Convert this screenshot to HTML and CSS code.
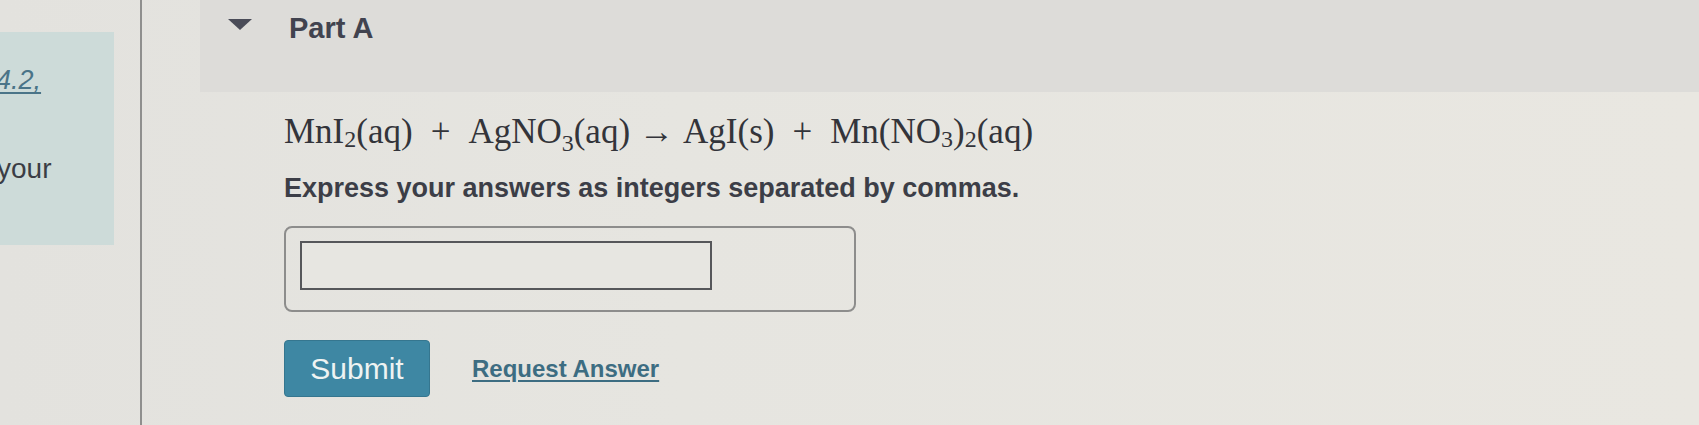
FILE: index.html
```html
<!DOCTYPE html>
<html>
<head>
<meta charset="utf-8">
<link rel="stylesheet" href="styles.css">
</head>
<body>
<div class="page">
  <aside class="side">
    <div class="note">
      <a class="note-link" href="#">4.2,</a>
      <p class="note-text">your</p>
    </div>
  </aside>
  <div class="divider"></div>
  <main class="main">
    <header class="part-head">
      <span class="caret"></span>
      <h2 class="part-title">Part A</h2>
    </header>
    <section class="part-body">
      <div class="equation">MnI<span class="sub">2</span>(aq)<span class="op">+</span>AgNO<span class="sub low">3</span>(aq)<span class="arrow">→</span>AgI(s)<span class="op">+</span>Mn(NO<span class="sub">3</span>)<span class="sub">2</span>(aq)</div>
      <p class="prompt">Express your answers as integers separated by commas.</p>
      <div class="answer-box">
        <div class="answer-input"></div>
      </div>
      <div class="actions">
        <button class="submit">Submit</button>
        <a class="request" href="#">Request Answer</a>
      </div>
    </section>
  </main>
</div>
</body>
</html>
```
FILE: styles.css
```css
* { box-sizing: border-box; }
html, body {
  margin: 0;
  padding: 0;
  width: 1699px;
  height: 425px;
  overflow: hidden;
  background: #e6e5e0;
}
.page {
  display: flex;
  height: 425px;
  font-family: "Liberation Sans", Arial, sans-serif;
  background: linear-gradient(90deg, #e3e2de 0%, #e6e5e0 40%, #e9e7e1 100%);
}
.side {
  width: 140px;
  flex: none;
  padding-top: 32px;
}
.note {
  width: 114px;
  height: 213px;
  background: #cddbd9;
  overflow: hidden;
  padding-top: 35px;
}
.note-link {
  display: block;
  margin-left: -4px;
  font-size: 27px;
  font-style: italic;
  line-height: 26px;
  color: #4a7488;
  text-decoration: underline;
  text-decoration-thickness: 2px;
  text-underline-offset: 3px;
}
.note-text {
  margin: 60px 0 0 -3px;
  font-size: 28px;
  line-height: 32px;
  color: #3b3d45;
}
.divider {
  width: 2px;
  flex: none;
  background: #8f8f8e;
}
.main {
  flex: 1;
  padding-left: 58px;
  display: flex;
  flex-direction: column;
}
.part-head {
  height: 92px;
  background: #dddcd9;
  display: flex;
  align-items: flex-start;
  padding: 12px 0 0 28px;
}
.caret {
  width: 0;
  height: 0;
  margin-top: 7px;
  border-left: 12px solid transparent;
  border-right: 12px solid transparent;
  border-top: 11px solid #4a4c58;
}
.part-title {
  margin: 0 0 0 37px;
  font-size: 29px;
  line-height: 32px;
  font-weight: bold;
  color: #41434f;
}
.part-body {
  padding-left: 84px;
}
.equation {
  margin-top: 20px;
  font-family: "Liberation Serif", "Times New Roman", serif;
  font-size: 35px;
  line-height: 40px;
  color: #33343a;
  white-space: nowrap;
}
.sub {
  font-size: 24px;
  vertical-align: -4px;
  line-height: 0;
}
.sub.low { vertical-align: -8px; }
.op { margin: 0 18px; }
.arrow { margin: 0 9px; }
.prompt {
  margin: 21px 0 0;
  font-size: 27px;
  line-height: 30px;
  font-weight: bold;
  color: #3c3e47;
}
.answer-box {
  margin-top: 23px;
  width: 572px;
  height: 86px;
  border: 2px solid #8d8d8c;
  border-radius: 8px;
  padding: 13px 0 0 14px;
}
.answer-input {
  width: 412px;
  height: 49px;
  border: 2px solid #56575a;
  background: #e7e6e1;
}
.actions {
  margin-top: 28px;
  display: flex;
  align-items: center;
  gap: 42px;
}
.submit {
  width: 146px;
  height: 57px;
  border: 1px solid #35768f;
  border-radius: 4px;
  background: #3e87a3;
  color: #eef3f2;
  font-family: "Liberation Sans", Arial, sans-serif;
  font-size: 30px;
  padding: 0;
}
.request {
  font-size: 24px;
  font-weight: bold;
  color: #3d6d82;
  text-decoration: underline;
  text-decoration-thickness: 2px;
  text-underline-offset: 3px;
}
```
